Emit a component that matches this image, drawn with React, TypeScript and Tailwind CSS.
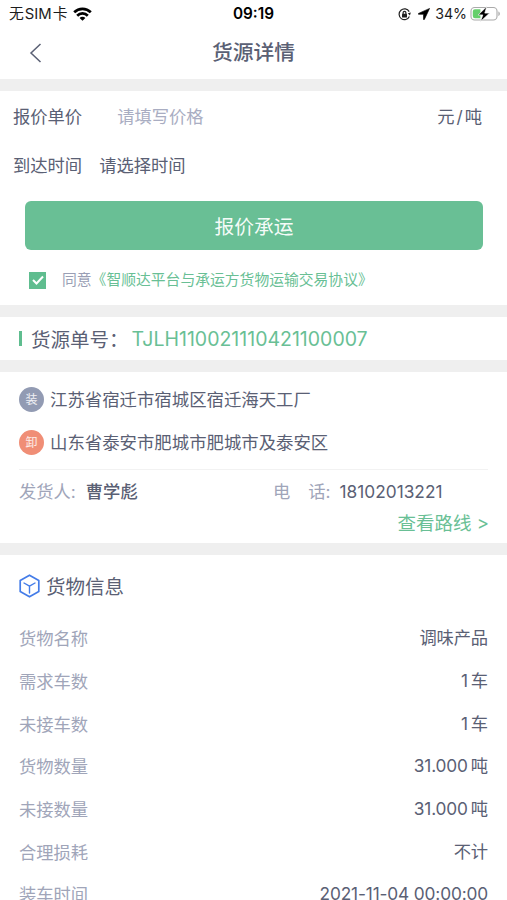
import type { ReactNode } from 'react';

const CARGO: { label: string; value: string; unit?: string }[] = [
  { label: '货物名称', value: '调味产品' },
  { label: '需求车数', value: '1', unit: '车' },
  { label: '未接车数', value: '1', unit: '车' },
  { label: '货物数量', value: '31.000', unit: '吨' },
  { label: '未接数量', value: '31.000', unit: '吨' },
  { label: '合理损耗', value: '不计' },
  { label: '装车时间', value: '2021-11-04 00:00:00' },
];

function StatusBar() {
  return (
    <div className="grid h-7 grid-cols-[1fr_auto_1fr] items-center pl-[9px] pr-[6px] text-[15px] text-[#1c1c1c]">
      <div className="flex items-center gap-[6px]">
        <span className="text-[14.8px]">无<span className="mx-[1px]">SIM</span>卡</span>
        <svg width="19" height="14" viewBox="0 0 19 14" fill="none" stroke="#000" strokeWidth="2.7">
          <path d="M1.2 5.2a11.8 11.8 0 0 1 16.6 0" />
          <path d="M4.2 8.7a7.4 7.4 0 0 1 10.6 0" />
          <path d="M6.6 11a3.9 3.9 0 0 1 5.8 0L9.5 13.8z" fill="#000" stroke="none" />
        </svg>
      </div>
      <span className="-ml-[3px] text-[15.3px] font-semibold text-black">09:19</span>
      <div className="flex items-center justify-end">
        <svg width="13" height="13" viewBox="0 0 13 13" fill="none" stroke="#222" strokeWidth="1.2">
          <path d="M11.4 8.6A5.4 5.4 0 1 1 11.2 3.6" />
          <path d="M12.9 4.6l-1 3-2.1-2.4z" fill="#222" stroke="none" />
          <rect x="4" y="5.8" width="5" height="3.7" rx=".6" fill="#222" stroke="none" />
          <path d="M5.1 6V4.8a1.4 1.4 0 0 1 2.8 0V6" />
        </svg>
        <svg className="ml-[7px]" width="12" height="12" viewBox="0 0 12 12" fill="#000" stroke="#000" strokeWidth=".6" strokeLinejoin="round">
          <path d="M11.6.4L.5 5.4c-.5.3-.4.9.2.9h4.8v4.9c0 .7.7.7.9.2z" />
        </svg>
        <span className="ml-[5px] text-[14.2px]">34%</span>
        <svg className="ml-[3px]" width="31" height="16" viewBox="0 0 31 16" fill="none">
          <rect x="1" y="1.5" width="26" height="12.5" rx="3.6" stroke="#aaa" strokeWidth="1.1" />
          <path d="M28.4 5.5c1.9.7 1.9 3.8 0 4.5z" fill="#aaa" />
          <path d="M5 3.3h5.4v8.9H5A2.2 2.2 0 0 1 2.8 10V5.5A2.2 2.2 0 0 1 5 3.3z" fill="#65cf6b" />
          <path d="M16.8.6L8.2 8.9h4.6l-2.2 6.5 9-8.3h-4.8z" fill="#000" stroke="#fff" strokeWidth=".7" />
        </svg>
      </div>
    </div>
  );
}

function Address({ tag, color, children }: { tag: string; color: string; children: ReactNode }) {
  return (
    <div className="flex h-[43px] items-center">
      <span className={`flex h-[25px] w-[25px] items-center justify-center rounded-full text-[12px] text-white/85 ${color}`}>{tag}</span>
      <span className="ml-[6px] text-[17.4px]">{children}</span>
    </div>
  );
}

export default function App() {
  return (
    <div className="flex h-[900px] w-full flex-col overflow-hidden bg-[#efefef] font-['Inter','Noto_Sans_CJK_SC',sans-serif] text-[17.3px] leading-6 text-[#5a6074]">
      <header className="h-[79px] shrink-0 bg-white">
        <StatusBar />
        <div className="grid h-[49px] grid-cols-[1fr_auto_1fr] items-center">
          <button className="ml-[28px] w-fit" aria-label="返回">
            <svg width="14" height="20" viewBox="0 0 14 20" fill="none" stroke="#5a6074" strokeWidth="1.5">
              <path d="M12.5 1L3 10l9.5 9" />
            </svg>
          </button>
          <h1 className="text-[20.8px] font-medium">货源详情</h1>
        </div>
      </header>

      <section className="mt-3 h-[214px] shrink-0 bg-white">
        <div className="flex h-[49px] items-center pt-0.5 pl-[13px] pr-[25px]">
          <span>报价单价</span>
          <span className="ml-[35px] text-[#a9adc2]">请填写价格</span>
          <span className="ml-auto">元<span className="mx-[2px]">/</span>吨</span>
        </div>
        <div className="flex h-[49px] items-center pt-0.5 pl-[13px]">
          <span>到达时间</span>
          <span className="ml-[17px]">请选择时间</span>
        </div>
        <button className="mx-[25px] mt-3 flex h-[49px] w-[458px] items-center justify-center rounded-[6px] bg-[#69bf95] pt-0.5 text-[19.8px] text-white/95">
          报价承运
        </button>
        <div className="mt-[18px] flex items-center pl-[29px] text-[14.8px]">
          <span className="flex h-[17px] w-[17px] items-center justify-center bg-[#5fbd8f]">
            <svg width="12" height="10" viewBox="0 0 12 10" fill="none" stroke="#fff" strokeWidth="2">
              <path d="M1 5l3.5 3.5L11 1.5" />
            </svg>
          </span>
          <span className="ml-4 text-[#9a9fb5]">同意</span>
          <span className="text-[#69bf95]">《智顺达平台与承运方货物运输交易协议》</span>
        </div>
      </section>

      <section className="mt-3 flex h-[43px] shrink-0 items-center bg-white pl-[19px] text-[19.5px]">
        <span className="h-[15px] w-[3px] bg-[#5fbd8f]" />
        <span className="ml-[9px] pt-0.5">货源单号：</span>
        <span className="ml-[3px] text-[#69bf95]">TJLH110021110421100007</span>
      </section>

      <section className="mt-3 h-[171px] shrink-0 bg-white px-[19px] pt-[6px]">
        <Address tag="装" color="bg-[#929bb3]">江苏省宿迁市宿城区宿迁海天工厂</Address>
        <Address tag="卸" color="bg-[#f08e76]">山东省泰安市肥城市肥城市及泰安区</Address>
        <div className="mt-[5px] flex h-[45px] items-center border-t border-[#f2f2f2]">
          <div className="w-[254px]">
            <span className="text-[#a0a5b9]">发货人:</span>
            <span className="ml-[10px] font-medium">曹学彪</span>
          </div>
          <span className="text-[#a0a5b9]">电</span>
          <span className="ml-[18px] text-[#a0a5b9]">话:</span>
          <span className="ml-[9px]">18102013221</span>
        </div>
        <div className="-mr-px -mt-[3px] text-right text-[18.5px] text-[#69bf95]">查看路线 &gt;</div>
      </section>

      <section className="mt-3 h-[345px] shrink-0 overflow-hidden bg-white px-[19px]">
        <div className="flex h-[62px] items-center">
          <svg width="21" height="24" viewBox="0 0 21 24" fill="none" stroke="#447ce8" strokeWidth="1.7" strokeLinejoin="round">
            <path d="M10.5 1.2l9.3 5.3v11l-9.3 5.3-9.3-5.3v-11z" />
            <path d="M5 9l5.5 3.2L16 9M10.5 12.2V19" strokeLinecap="round" strokeWidth="1.4" />
          </svg>
          <h2 className="ml-[6px] pt-0.5 text-[19.5px]">货物信息</h2>
        </div>
        {CARGO.map((row) => (
          <div key={row.label} className="flex h-[42.7px] items-center justify-between">
            <span className="pt-0.5 text-[#a0a5b9]">{row.label}</span>
            <span className="tracking-[-0.15px]">
              {row.value}
              {row.unit && <span className="ml-[3px]">{row.unit}</span>}
            </span>
          </div>
        ))}
      </section>
    </div>
  );
}
